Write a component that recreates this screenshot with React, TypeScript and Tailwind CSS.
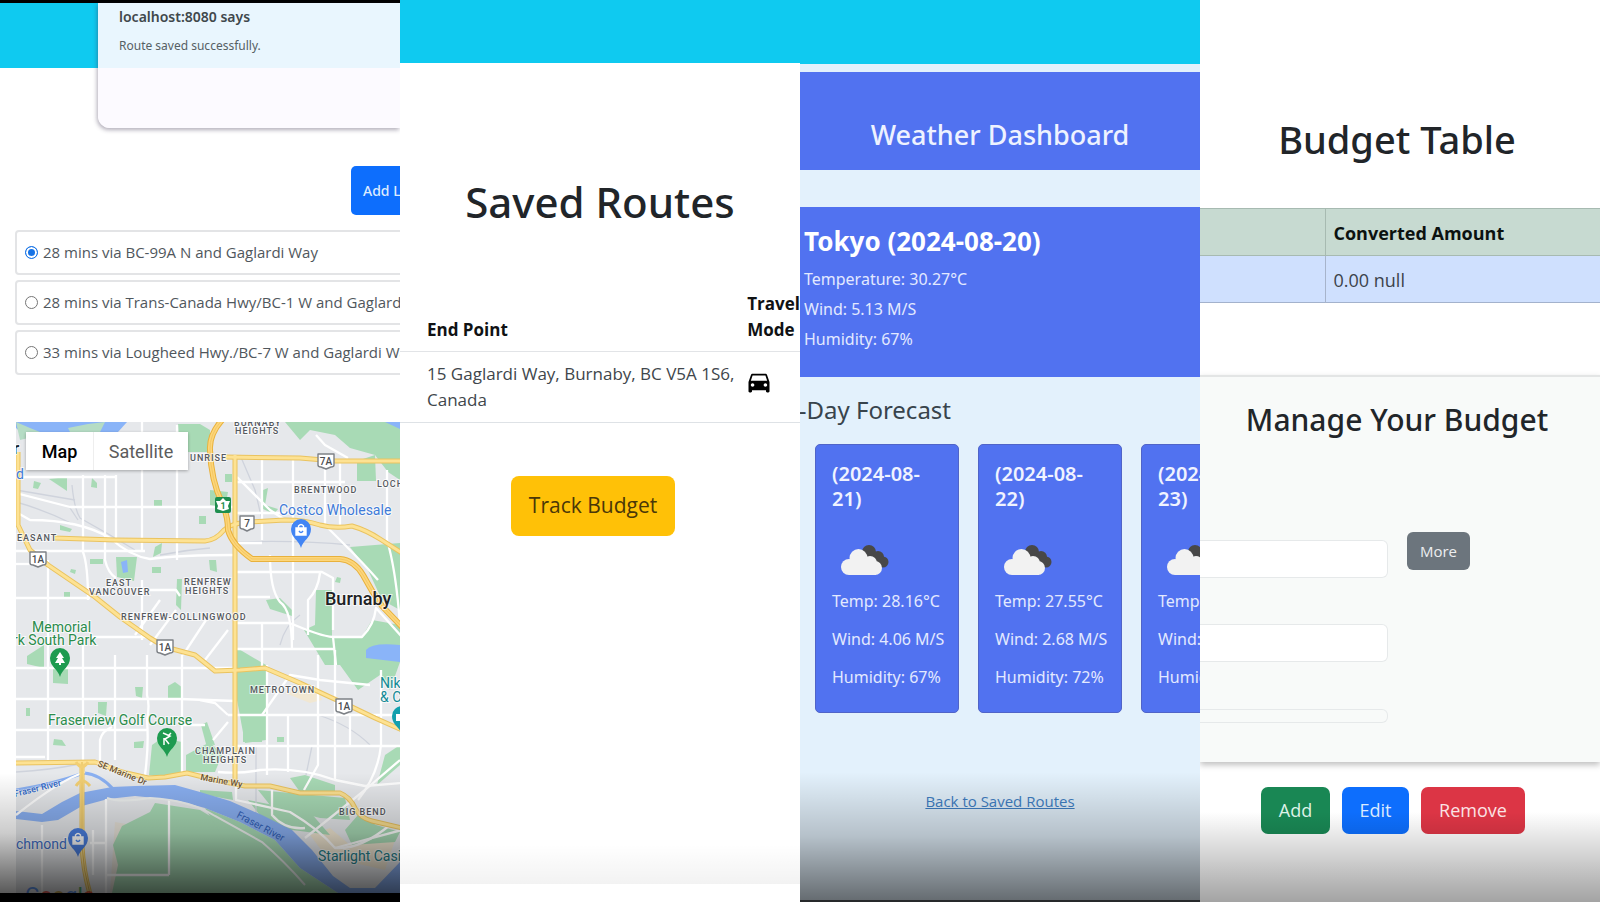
import React from "react";
import { MdDirectionsCar } from "react-icons/md";

const routes = [
  "28 mins via BC-99A N and Gaglardi Way",
  "28 mins via Trans-Canada Hwy/BC-1 W and Gaglardi Way",
  "33 mins via Lougheed Hwy./BC-7 W and Gaglardi Way",
];

const forecast = [
  { date: "(2024-08-21)", temp: "28.16°C", wind: "4.06 M/S", humidity: "67%" },
  { date: "(2024-08-22)", temp: "27.55°C", wind: "2.68 M/S", humidity: "72%" },
  { date: "(2024-08-23)", temp: "", wind: "", humidity: "" },
];

const arterials = [
  "M18 452 L18 525 L30 550 L48 565 L95 597 L120 617 L150 638 L165 647 L195 655 L215 671 L240 670 L265 668 L300 683 L330 697 L350 706 L375 718 L402 730",
  "M54 538 L115 540 L205 541 Q216 540 224 530 Q230 524 247 522 L285 520 Q305 520 320 525 Q335 529 352 526 Q366 530 380 539 L402 553",
  "M235 455 L235 782",
  "M225 457 L300 458 L335 461 L402 461",
  "M16 763 L95 762 L122 772 L148 778 L165 777 L187 773 L215 780 L245 786 L270 786 L300 793 L340 793 Q350 797 355 808 Q360 818 372 821 L402 828",
  "M82 762 L82 845 Q83 870 90 894",
];

const highway =
  "M222 420 Q209 435 210 450 Q211 480 222 503 Q228 516 228 530 Q232 545 252 559 L340 559 Q354 560 363 575 Q372 592 382 606 L402 627";

const streets = [
  "M83 475 V552 Q88 565 88 600 M83 640 V762",
  "M105 475 V560 Q108 573 116 578",
  "M116 475 V540 M115 655 V760",
  "M142 422 V550 M142 580 V640",
  "M177 425 V560 M182 655 V775",
  "M48 560 V760",
  "M147 655 V695 Q150 705 147 720 Q149 745 145 775",
  "M100 765 V740 Q102 731 112 727",
  "M262 456 V540 M262 622 V668",
  "M293 456 V640",
  "M325 456 V525",
  "M340 461 V525",
  "M387 470 V540 Q396 570 400 625",
  "M267 665 V775",
  "M288 715 V772",
  "M318 655 V765 L304 790",
  "M335 650 V780",
  "M350 715 V745",
  "M381 670 V745 Q378 775 358 800",
  "M16 477 H116",
  "M16 493 L70 507 H235",
  "M16 512 L30 520 Q80 520 110 538 Q130 556 150 559 Q180 555 235 555",
  "M16 551 H145",
  "M16 564 H45",
  "M16 598 H90",
  "M90 637 H150",
  "M16 668 H235",
  "M16 699 H180 L235 701",
  "M16 730 H148 M182 725 H205",
  "M150 590 H176 L180 596",
  "M135 635 L160 600 M150 645 L176 610 M183 655 L206 620 M205 660 L228 630",
  "M237 482 H345",
  "M237 477 L270 510 L285 520",
  "M237 513 H290 M237 543 H262",
  "M325 525 L345 545 Q365 565 378 580",
  "M237 572 H322 L333 578 V630 M320 573 Q318 590 308 600 L308 635",
  "M270 555 Q270 590 280 602 Q292 610 292 650",
  "M237 597 H270",
  "M237 623 H290 Q320 636 333 637 L362 637 Q374 625 376 608 L402 637",
  "M237 649 H335 M333 637 L336 665",
  "M262 715 L290 675 L320 680 L370 685",
  "M228 715 H400",
  "M236 746 H400",
  "M16 757 H45 M218 772 Q240 774 260 770 Q300 767 335 780 L365 786 L402 783",
  "M200 700 L215 703 L228 715 M213 740 L228 722",
  "M272 790 V815 Q285 830 305 828",
  "M236 785 V800 L290 812 Q320 830 335 848 L402 830",
  "M305 838 L365 790 L400 760",
  "M335 848 Q360 850 390 825",
  "M106 799 V893 M169 800 V875 M106 875 H169 M42 825 V893 M93 830 V875",
  "M316 435 L325 445 L348 458",
  "M90 843 H106 M16 815 Q60 780 85 772",
];

const parks = [
  "178,424 200,424 210,430 210,452 180,452",
  "49,479 67,477 67,491",
  "34,481 41,483 38,489 33,488",
  "92,478 97,483 97,488 91,487",
  "154,500 162,500 162,506 154,506",
  "199,516 206,516 206,524 199,524",
  "116,557 137,557 134,581 117,577",
  "90,559 103,559 103,564 90,564",
  "152,567 161,567 161,573 152,573",
  "155,547 162,543 161,553 153,557",
  "60,525 72,529 70,532 60,530",
  "64,592 70,592 70,597 64,597",
  "71,569 76,570 75,574 70,572",
  "177,579 182,579 181,610 176,605",
  "27,656 44,645 44,668 27,664",
  "53,668 68,668 68,684 53,683",
  "98,702 107,702 106,716 98,713",
  "135,687 143,687 142,698 136,696",
  "168,686 175,682 183,688 181,700 168,698",
  "26,708 30,708 30,716 26,716",
  "54,739 62,740 66,746 53,745",
  "134,742 144,741 143,748 134,748",
  "149,775 152,745 162,738 182,742 181,773 160,777",
  "186,755 210,742 222,755 215,772 186,772",
  "201,725 207,722 215,745 206,744",
  "285,422 400,422 400,480 388,472 375,455 350,448 335,435 310,430 300,440",
  "357,461 375,455 376,481 357,481",
  "263,490 268,488 265,505 278,509 274,514 263,509",
  "210,490 228,492 225,508 210,505",
  "225,474 232,474 232,482 225,482",
  "350,547 400,543 400,610 382,600 368,570",
  "316,590 332,590 332,637 362,637 372,620 400,625 400,662 390,690 380,675 358,690 340,665 325,665 304,630 315,625",
  "266,600 280,598 292,610 292,616 270,609",
  "237,648 266,665 266,740 245,743 237,700",
  "243,718 262,715 262,742 243,742",
  "277,737 284,737 284,742 277,742",
  "290,778 305,775 335,785 335,792 300,792",
  "400,745 385,755 377,785 400,765",
  "248,800 310,812 330,835 300,831 275,828 262,818",
  "258,790 345,798 350,820 320,818 270,805",
  "345,830 358,815 376,825 400,832 395,842 352,845",
  "200,790 232,792 233,800 200,794",
  "337,577 341,578 340,583 335,582",
  "209,560 216,560 217,572 210,570",
];

const industrial = [
  "M16 502 Q45 510 75 525",
  "M16 490 L75 500",
  "M72 485 Q74 508 80 518 L110 535 L135 550",
  "M70 508 L78 520",
  "M237 542 Q300 540 350 545",
  "M160 555 Q185 550 210 548",
  "M240 455 L255 490 L262 520",
  "M318 715 Q350 725 370 745",
  "M312 746 L306 775",
  "M256 745 V830",
  "M16 772 Q50 770 80 764",
  "M280 645 Q285 625 300 615",
];

function Shield({ x, y, label }: { x: number; y: number; label: string }) {
  const half = label.length > 1 ? 8 : 7;
  return (
    <g>
      <path
        d={`M${x - half} ${y - 7} H${x + half} V${y + 4} Q${x + half} ${y + 6} ${x + half - 3} ${y + 6} L${x} ${y + 8} L${x - half + 3} ${y + 6} Q${x - half} ${y + 6} ${x - half} ${y + 4} Z`}
        fill="#fff"
        stroke="#7d8186"
        strokeWidth="1.4"
        strokeLinejoin="round"
      />
      <text x={x} y={y + 4} textAnchor="middle" fontSize="10" fontWeight="500" fill="#4a4d51">
        {label}
      </text>
    </g>
  );
}

function Pin({ x, y, color, children }: { x: number; y: number; color: string; children?: React.ReactNode }) {
  return (
    <g transform={`translate(${x} ${y})`}>
      <path d="M0 18 C-2 10 -10 8 -10 -1 A10 10 0 0 1 10 -1 C10 8 2 10 0 18 Z" fill={color} />
      {children}
    </g>
  );
}

function Bag() {
  return (
    <g fill="none" stroke="#fff" strokeWidth="1.4">
      <path d="M-5 -2 H5 V5 H-5 Z" fill="#fff" />
      <path d="M-2.500 -2 V-4 Q0 -7 2.500 -4 V-2" />
      <path d="M-2 1 Q0 4 2 1" stroke="#4285f4" />
    </g>
  );
}

function CityMap() {
  return (
    <svg
      viewBox="16 422 384 471"
      preserveAspectRatio="xMinYMin slice"
      className="h-full w-full"
      fontFamily="Roboto, sans-serif"
      role="img"
      aria-label="Map of Burnaby"
    >
      <rect x="16" y="422" width="384" height="471" fill="#e6e8eb" />
      <path d="M16 422 H127 L118 432 L100 440 L30 440 L16 428 Z" fill="#8ab4f8" />
      <path d="M88 424 L105 422 L100 432 H70 L68 428 Z M16 422 L30 428 L45 434 L20 440 Z" fill="#b5dcc4" />
      <path d="M160 830 L115 822 L110 893 L125 893 L122 860 Z" fill="#e8e3d9" />
      <path d="M310 835 L330 828 L350 845 L395 840 L385 870 L350 862 L325 855 Z M285 693 L318 686 L322 700 L310 703 Z" fill="#f1e7d2" />
      <g fill="#a8dab5">
        {parks.map((points) => (
          <polygon key={points} points={points} />
        ))}
        <path d="M155 803 L200 810 L230 828 L272 855 L300 893 H112 L118 865 L113 845 L122 826 L150 812 Z" />
        <path d="M205 808 L240 822 L275 840 L300 868 L338 893 H290 L230 850 Z" />
      </g>
      <path d="M121 562 L127 560 L128 572 L123 573 Z M366 650 Q372 642 400 645 V662 L366 658 Z M385 422 H400 V429 Z" fill="#8ab4f8" />
      <g fill="none" stroke="#cfd3dc" strokeWidth="1.3">
        {industrial.map((d) => (
          <path key={d} d={d} />
        ))}
      </g>
      <path
        d="M16 811 L42 814 L62 802 L80 793 L112 787 L135 786 L175 785 L200 792 L230 801 L262 815 L292 830 L312 850 L333 876 L350 888 L375 888 L402 860 V893 H338 L300 868 L275 840 L240 822 L205 808 L175 800 L135 796 L108 799 L82 806 L58 820 L42 822 L16 819 Z"
        fill="#8ab0f2"
      />
      <path d="M16 790 Q50 785 84 773 Q100 774 114 790" fill="none" stroke="#8ab0f2" strokeWidth="3" />
      <g fill="none" stroke="#fff" strokeWidth="2.3" strokeLinejoin="round">
        {streets.map((d) => (
          <path key={d} d={d} />
        ))}
      </g>
      <path d="M107 798 Q120 803 150 798 Q190 800 215 816 L262 842 Q285 862 305 885" fill="none" stroke="#eef1f0" strokeWidth="2" />
      <g fill="none" strokeLinejoin="round">
        {arterials.map((d) => (
          <path key={d} d={d} stroke="#eac35f" strokeWidth="5" />
        ))}
        {arterials.map((d) => (
          <path key={d} d={d} stroke="#fde293" strokeWidth="3" />
        ))}
        <path d={highway} stroke="#e8b13c" strokeWidth="6" />
        <path d={highway} stroke="#fdd67a" strokeWidth="4" />
        <path d={highway} stroke="#f3c765" strokeWidth="1" />
        <path d="M82 762 V845 Q83 870 90 894" stroke="#e2b850" strokeWidth="1" />
        <path d="M76 762 Q82 772 88 762 M76 786 Q82 776 90 786" stroke="#f2cf74" strokeWidth="3" />
      </g>

      <g fontSize="9" fontWeight="500" fill="#55595e" stroke="#fff" strokeWidth="2" strokeOpacity="0.7" paintOrder="stroke" letterSpacing="1">
        <text x="234" y="426">BURNABY</text>
        <text x="235" y="434">HEIGHTS</text>
        <text x="190" y="461">UNRISE</text>
        <text x="294" y="493">BRENTWOOD</text>
        <text x="377" y="487">LOCHDALE</text>
        <text x="17" y="541">EASANT</text>
        <text x="106" y="586">EAST</text>
        <text x="89" y="595">VANCOUVER</text>
        <text x="184" y="585">RENFREW</text>
        <text x="185" y="594">HEIGHTS</text>
        <text x="121" y="620">RENFREW-COLLINGWOOD</text>
        <text x="250" y="693">METROTOWN</text>
        <text x="195" y="754">CHAMPLAIN</text>
        <text x="203" y="763">HEIGHTS</text>
        <text x="339" y="815">BIG BEND</text>
      </g>
      <g stroke="#fff" strokeWidth="2" strokeOpacity="0.7" paintOrder="stroke">
        <text x="325" y="605" fontSize="18" fontWeight="500" fill="#202124">Burnaby</text>
        <g fontSize="14">
          <text x="279" y="515" fill="#3f7bd8">Costco Wholesale</text>
          <text x="32" y="632" fill="#2b8c4c">Memorial</text>
          <text x="13" y="645" fill="#2b8c4c">rk South Park</text>
          <text x="48" y="725" fill="#2b8c4c">Fraserview Golf Course</text>
          <text x="380" y="688" fill="#128a96">Nikkei</text>
          <text x="380" y="702" fill="#128a96">&amp; Centre</text>
          <text x="16" y="849" fill="#3f70c8">chmond</text>
          <text x="318" y="861" fill="#25808a">Starlight Casino</text>
          <text x="16" y="479" fill="#3f7bd8">d</text>
        </g>
        <text x="13" y="454" fontSize="17" fontWeight="700" fill="#202124">r</text>
      </g>
      <g fontSize="10" stroke="#fff" strokeWidth="1.500" strokeOpacity="0.5" paintOrder="stroke">
        <text transform="translate(15 797) rotate(-14)" fontSize="9" fontWeight="500" fill="#2f68c9">Fraser River</text>
        <text transform="translate(236 817) rotate(28)" fill="#2f5fb8" strokeOpacity="0">Fraser River</text>
        <text transform="translate(97 766) rotate(22)" fontSize="9" fontWeight="500" fill="#6d5537">SE Marine Dr</text>
        <text transform="translate(200 780) rotate(10)" fontSize="9" fontWeight="500" fill="#6d5537">Marine Wy</text>
      </g>

      <Shield x={38} y={559} label="1A" />
      <Shield x={165} y={647} label="1A" />
      <Shield x={344} y={706} label="1A" />
      <Shield x={326} y={461} label="7A" />
      <Shield x={247} y={523} label="7" />
      <rect x="215" y="497" width="16" height="16" rx="2" fill="#1e8e4e" />
      <path d="M223 498 L226 501 L230 501 L228 506 L229 509 L223 511 L217 509 L218 506 L216 501 L220 501 Z" fill="#fff" />
      <text x="223" y="509" textAnchor="middle" fontSize="9" fontWeight="700" fill="#1e8e4e">1</text>

      <Pin x={301} y={530} color="#4285f4"><Bag /></Pin>
      <Pin x={78} y={839} color="#4a7fe0"><Bag /></Pin>
      <Pin x={60} y={659} color="#1e9b50">
        <path d="M0 -7 L4 -1 H2 L5 4 H1 V6 H-1 V4 H-5 L-2 -1 H-4 Z" fill="#fff" />
      </Pin>
      <Pin x={167} y={739} color="#1e9b50">
        <path d="M-4 -6 L3 -3 L-2 0 L2 5 M-3 -1 L-3 6 M4 -6 L1 -3" fill="none" stroke="#fff" strokeWidth="1.500" />
      </Pin>
      <Pin x={402} y={717} color="#12a0ae">
        <path d="M-6 -3 H2 V4 H-6 Z" fill="#fff" />
      </Pin>
      <text x="25" y="903" fontSize="22" opacity="0.8">
        <tspan fill="#4285f4">G</tspan>
        <tspan fill="#ea4335">o</tspan>
        <tspan fill="#c9a23a">o</tspan>
        <tspan fill="#4285f4">g</tspan>
        <tspan fill="#34a853">l</tspan>
        <tspan fill="#ea4335">e</tspan>
      </text>
    </svg>
  );
}

function RoutePlanner() {
  return (
    <section className="relative flex min-h-screen flex-col overflow-hidden bg-white">
      <div className="h-[3px] bg-black" />
      <header className="h-[65px] bg-[#0fcaf0]" />
      <div
        role="alertdialog"
        aria-label="localhost:8080 says"
        className="absolute top-[3px] right-0 left-[98px] h-[125px] rounded-bl-[12px] bg-[#fcfaff]/92 pt-1 pl-[21px] font-['Noto_Sans','Open_Sans',sans-serif] shadow-[-1px_2px_4px_rgba(60,50,80,0.4)]"
      >
        <h2 className="text-[14px] leading-5 font-semibold text-[#40484c]">localhost:8080 says</h2>
        <p className="mt-2 text-[12px] leading-[22px] text-[#566064]">Route saved successfully.</p>
      </div>

      <button
        type="button"
        className="mt-[98px] -mr-16 h-[49px] w-[113px] self-end rounded-[5px] bg-[#0d6efd] pl-3 text-left font-['Noto_Sans','Open_Sans',sans-serif] text-[14px] font-medium whitespace-nowrap text-[#dcebff]"
      >
        Add Location
      </button>

      <fieldset className="mt-[15px] -mr-16 ml-[15px] flex flex-col gap-[5px]">
        {routes.map((route, index) => (
          <label
            key={route}
            className="flex h-[45px] items-center gap-[5px] rounded-[4px] border-2 border-[#e3e4e6] pl-2 text-[15px] whitespace-nowrap text-[#50575d]"
          >
            <input
              type="radio"
              name="route"
              defaultChecked={index === 0}
              className="size-[13px] shrink-0 appearance-none rounded-full border border-[#767676] bg-white checked:border-[#1673e6] checked:bg-[#1673e6] checked:shadow-[inset_0_0_0_2px_white]"
            />
            {route}
          </label>
        ))}
      </fieldset>

      <div className="relative mt-[47px] ml-4 h-[471px] overflow-hidden">
        <CityMap />
        <div className="absolute top-[10px] left-[10px] flex h-[38px] font-['Roboto',sans-serif] text-[18px] shadow-[0_1px_3px_rgba(0,0,0,0.3)]">
          <button type="button" className="w-[67px] bg-white font-medium text-black">
            Map
          </button>
          <button type="button" className="w-[95px] border-l border-[#eeeeee] bg-white text-[#5c5c5c]">
            Satellite
          </button>
        </div>
      </div>
      <div className="pointer-events-none absolute inset-x-0 bottom-[9px] h-[120px] bg-linear-to-b from-transparent via-black/20 to-black/65" />
      <div className="min-h-[9px] grow bg-black" />
    </section>
  );
}

function SavedRoutes() {
  return (
    <section className="relative flex min-h-screen flex-col overflow-hidden bg-white">
      <header className="h-[63px] bg-[#0fcaf0]" />
      <h1 className="mt-[113px] text-center font-['Noto_Sans','Open_Sans',sans-serif] text-[42px] leading-[52px] font-medium text-[#212529]">
        Saved Routes
      </h1>
      <table className="mt-[59px] w-full text-left text-[17px] leading-[26px] text-[#40464b]">
        <thead>
          <tr className="border-b border-[#e2e4e7] align-bottom text-[#101214]">
            <th className="w-[342px] pt-1 pb-[8px] pl-[27px] font-bold">End Point</th>
            <th className="pt-1 pb-[8px] pl-2 font-bold">Travel Mode</th>
          </tr>
        </thead>
        <tbody>
          <tr className="border-b border-[#dee2e6]">
            <td className="py-[9px] pl-[27px]">15 Gaglardi Way, Burnaby, BC V5A 1S6, Canada</td>
            <td className="pt-4 pl-[6px] align-top">
              <MdDirectionsCar className="size-7 text-black" aria-label="Driving" />
            </td>
          </tr>
        </tbody>
      </table>
      <button
        type="button"
        className="mt-[53px] mr-[14px] h-[60px] w-[164px] self-center rounded-[8px] bg-[#ffc107] text-[21px] text-[#4a3708]"
      >
        Track Budget
      </button>
      <div className="absolute inset-x-0 bottom-[18px] h-10 bg-linear-to-b from-transparent to-black/5" />
    </section>
  );
}

function CloudIcon() {
  return (
    <svg viewBox="0 0 48 30" className="ml-[9px] h-[30px] w-12" role="img" aria-label="Broken clouds">
      <g fill="#484848">
        <circle cx="28" cy="7" r="7" />
        <circle cx="37" cy="12" r="6" />
        <circle cx="42" cy="17" r="5.500" />
        <path d="M24 10 L40 10 L44 22 L34 21 Z" />
      </g>
      <g fill="#f2f2f2">
        <circle cx="17.500" cy="13" r="9" />
        <circle cx="8" cy="22" r="8" />
        <circle cx="29" cy="18" r="7" />
        <circle cx="34" cy="23" r="7" />
        <path d="M8 18 L16 10 L30 16 L35 20 V30 H8 Z" />
      </g>
    </svg>
  );
}

function WeatherDashboard() {
  return (
    <section className="relative flex min-h-screen flex-col overflow-hidden bg-[#e3f1fc] font-['Noto_Sans','Open_Sans',sans-serif]">
      <header className="h-16 bg-[#0fcaf0]" />
      <h1 className="mt-2 h-[98px] bg-[#5172f0] pt-[45px] text-center text-[27px] leading-9 font-medium text-[#eef2ff]">
        Weather Dashboard
      </h1>
      <div className="mt-[37px] h-[170px] bg-[#5172f0] pt-[18px] pl-1 text-[#e3e9ff]">
        <h2 className="text-[26px] leading-8 font-bold text-white">Tokyo (2024-08-20)</h2>
        <div className="mt-[7px] text-[16px] leading-[30px]">
          <p>Temperature: 30.27°C</p>
          <p>Wind: 5.13 M/S</p>
          <p>Humidity: 67%</p>
        </div>
      </div>
      <h2 className="mt-[17px] -ml-[15px] text-[24px] leading-8 text-[#38444c]">5-Day Forecast</h2>
      <div className="mt-[18px] ml-[15px] flex gap-[19px]">
        {forecast.map((day) => (
          <article
            key={day.date}
            className="h-[269px] w-36 shrink-0 rounded-[5px] border border-[#5064c8] bg-[#5172f0] px-4 pt-4 text-[16px] leading-[22px] whitespace-nowrap text-[#e3e9ff]"
          >
            <h3 className="mb-[34px] w-24 text-[20px] leading-[25px] font-semibold whitespace-normal text-[#f0f3ff]">
              {day.date}
            </h3>
            <CloudIcon />
            <p className="mt-[15px]">Temp: {day.temp}</p>
            <p className="mt-4">Wind: {day.wind}</p>
            <p className="mt-4">Humidity: {day.humidity}</p>
          </article>
        ))}
      </div>
      <div className="pointer-events-none absolute inset-x-0 bottom-0 h-[130px] border-b-2 border-[#26292b] bg-linear-to-b from-transparent via-black/20 to-black/55" />
      <a href="#saved-routes" className="mt-[77px] self-center font-['Open_Sans',sans-serif] text-[15px] leading-[22px] text-[#3f7fc4] underline">
        Back to Saved Routes
      </a>
    </section>
  );
}

function BudgetPage() {
  return (
    <section className="relative flex min-h-screen flex-col overflow-hidden bg-white">
      <h1 className="mt-[113px] mr-[6px] text-center font-['Noto_Sans','Open_Sans',sans-serif] text-[38px] leading-[52px] font-medium text-[#212529]">
        Budget Table
      </h1>
      <table className="mt-[43px] w-full border-collapse text-left text-[18px] leading-6">
        <thead>
          <tr className="h-[47px] border-y border-[#a7bab1] bg-[#c7dad1] text-[#0c1210]">
            <th className="w-[125px] border-r border-[#a7bab1]" aria-label="Amount" />
            <th className="pt-[2px] pl-2 font-bold">Converted Amount</th>
          </tr>
        </thead>
        <tbody>
          <tr className="h-[47px] border-b border-[#a3b2cc] bg-[#cfe0fe] text-[#3c434b]">
            <td className="border-r border-[#a7b4cb]" />
            <td className="pt-[2px] pl-2">0.00 null</td>
          </tr>
        </tbody>
      </table>
      <form className="mt-[72px] h-[387px] border-t-2 border-[#e3e5e5] bg-[#f8faf9] pt-[23px] shadow-[0_3px_6px_rgba(0,0,0,0.25)]">
        <h2 className="mr-[6px] text-center font-['Noto_Sans','Open_Sans',sans-serif] text-[30px] leading-10 font-medium text-[#212529]">
          Manage Your Budget
        </h2>
        <div className="mt-[92px] flex items-start gap-[19px]">
          <div className="flex w-[188px] flex-col">
            <input aria-label="Budget name" className="mt-2 h-[38px] rounded-r-[6px] border border-l-0 border-[#e6e9ea] bg-white px-3" />
            <input aria-label="Budget amount" className="mt-[46px] h-[38px] rounded-r-[6px] border border-l-0 border-[#e6e9ea] bg-white px-3" />
            <div className="mt-[47px] h-[14px] rounded-r-[6px] border border-l-0 border-[#e6e9ea]" />
          </div>
          <button type="button" className="h-[38px] w-[63px] rounded-[6px] bg-[#6c757d] text-[15px] text-[#eceef0]">
            More
          </button>
        </div>
      </form>
      <div className="mt-[25px] mr-[14px] flex justify-center gap-3 text-[18px]">
        <button type="button" className="h-[47px] w-[69px] rounded-[7px] bg-[#198754] text-[#dff3e8]">
          Add
        </button>
        <button type="button" className="h-[47px] w-[67px] rounded-[7px] bg-[#0d6efd] text-[#dcebff]">
          Edit
        </button>
        <button type="button" className="h-[47px] w-[104px] rounded-[7px] bg-[#dc3545] text-[#fbe3e5]">
          Remove
        </button>
      </div>
      <div className="pointer-events-none absolute inset-x-0 bottom-0 h-[90px] bg-linear-to-b from-transparent to-black/36" />
    </section>
  );
}

export default function App() {
  return (
    <main className="grid min-h-screen grid-cols-4 bg-white font-['Open_Sans','Noto_Sans',sans-serif]">
      <RoutePlanner />
      <SavedRoutes />
      <WeatherDashboard />
      <BudgetPage />
    </main>
  );
}
